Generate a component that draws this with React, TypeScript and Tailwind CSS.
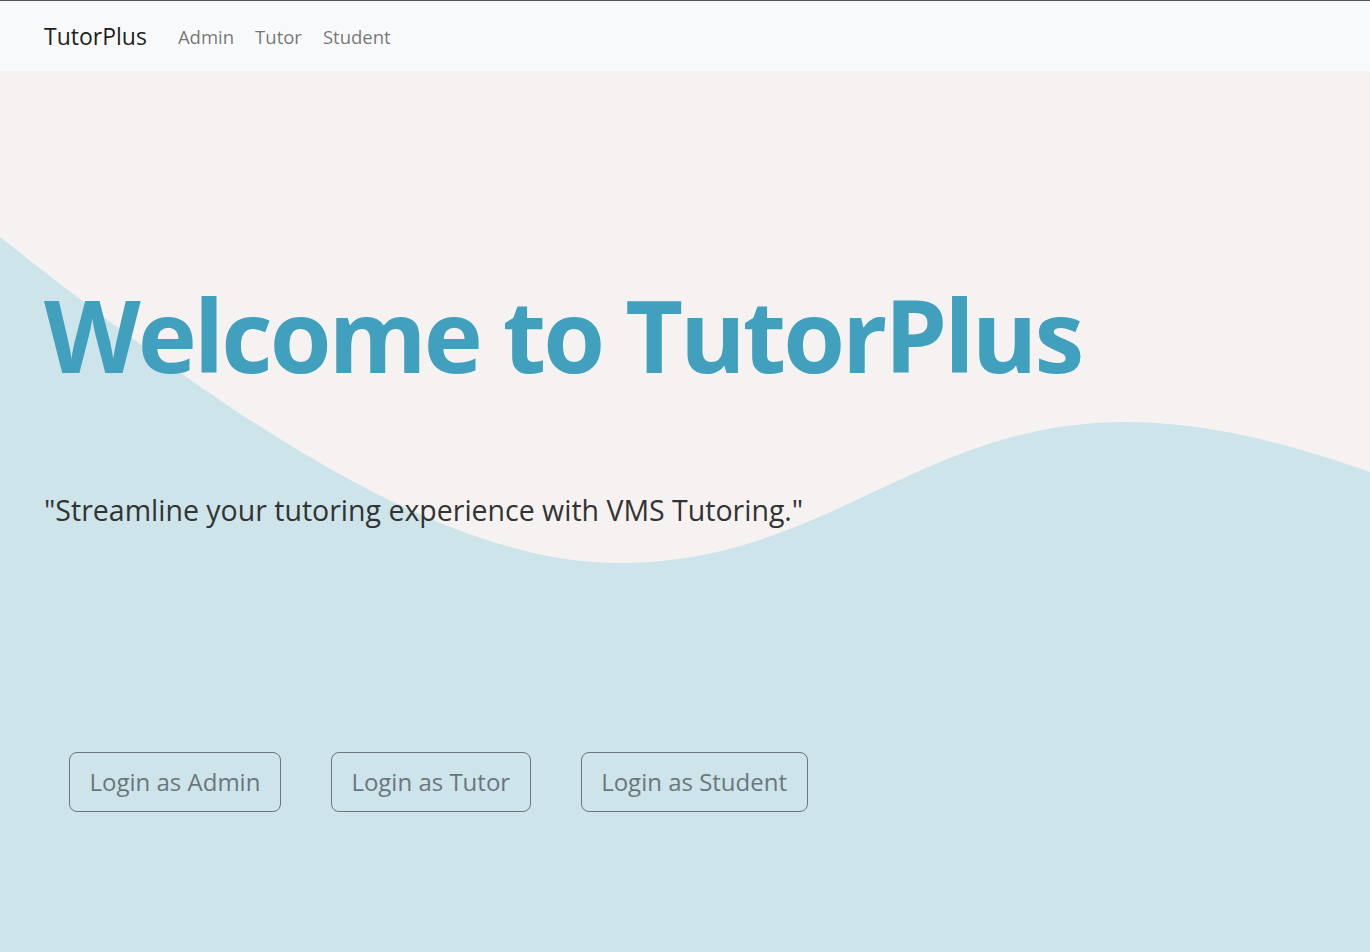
import React from "react";

const font = { fontFamily: '"Open Sans", "Noto Sans", sans-serif' };

function Wave() {
  // background wave, drawn in page pixels shifted by the 71px navbar
  return (
    <svg
      className="absolute inset-0 h-full w-full"
      viewBox="0 71 1370 881"
      preserveAspectRatio="none"
      aria-hidden="true"
    >
      <path
        fill="#cde5ea"
        d="M0,237 C250,435 450,563 620,563 C825,563 920,422 1125,422 C1200,422 1280,440 1370,472 L1370,952 L0,952 Z"
      />
    </svg>
  );
}

export default function App() {
  const logins = ["Login as Admin", "Login as Tutor", "Login as Student"];

  return (
    <div className="min-h-[952px] bg-[#f6f2f1]" style={font}>
      <nav className="flex h-[71px] items-center border-t border-[#555] bg-[#f8f9fa] px-[44px] pt-[1px]">
        <span className="mr-[31px] text-[23px] text-black/90">TutorPlus</span>
        <div className="flex gap-[21px] text-[18.5px] text-black/55">
          <a>Admin</a>
          <a>Tutor</a>
          <a>Student</a>
        </div>
      </nav>

      <main className="relative h-[881px] overflow-hidden">
        <Wave />
        <div className="relative px-[44px]">
          <h1 className="mt-[213px] text-[100px] font-bold leading-none tracking-[-3px] text-[#40a0bd]">
            Welcome to TutorPlus
          </h1>
          <p className="mt-[105px] text-[28.5px] text-[#333]">
            "Streamline your tutoring experience with VMS Tutoring."
          </p>
          <div className="mt-[220px] flex">
            {logins.map((label) => (
              <button
                key={label}
                className="mx-[25px] h-[60px] rounded-lg border border-[#6c757d] px-[19.5px] text-[24px] text-[#6c757d]"
              >
                {label}
              </button>
            ))}
          </div>
        </div>
      </main>
    </div>
  );
}
